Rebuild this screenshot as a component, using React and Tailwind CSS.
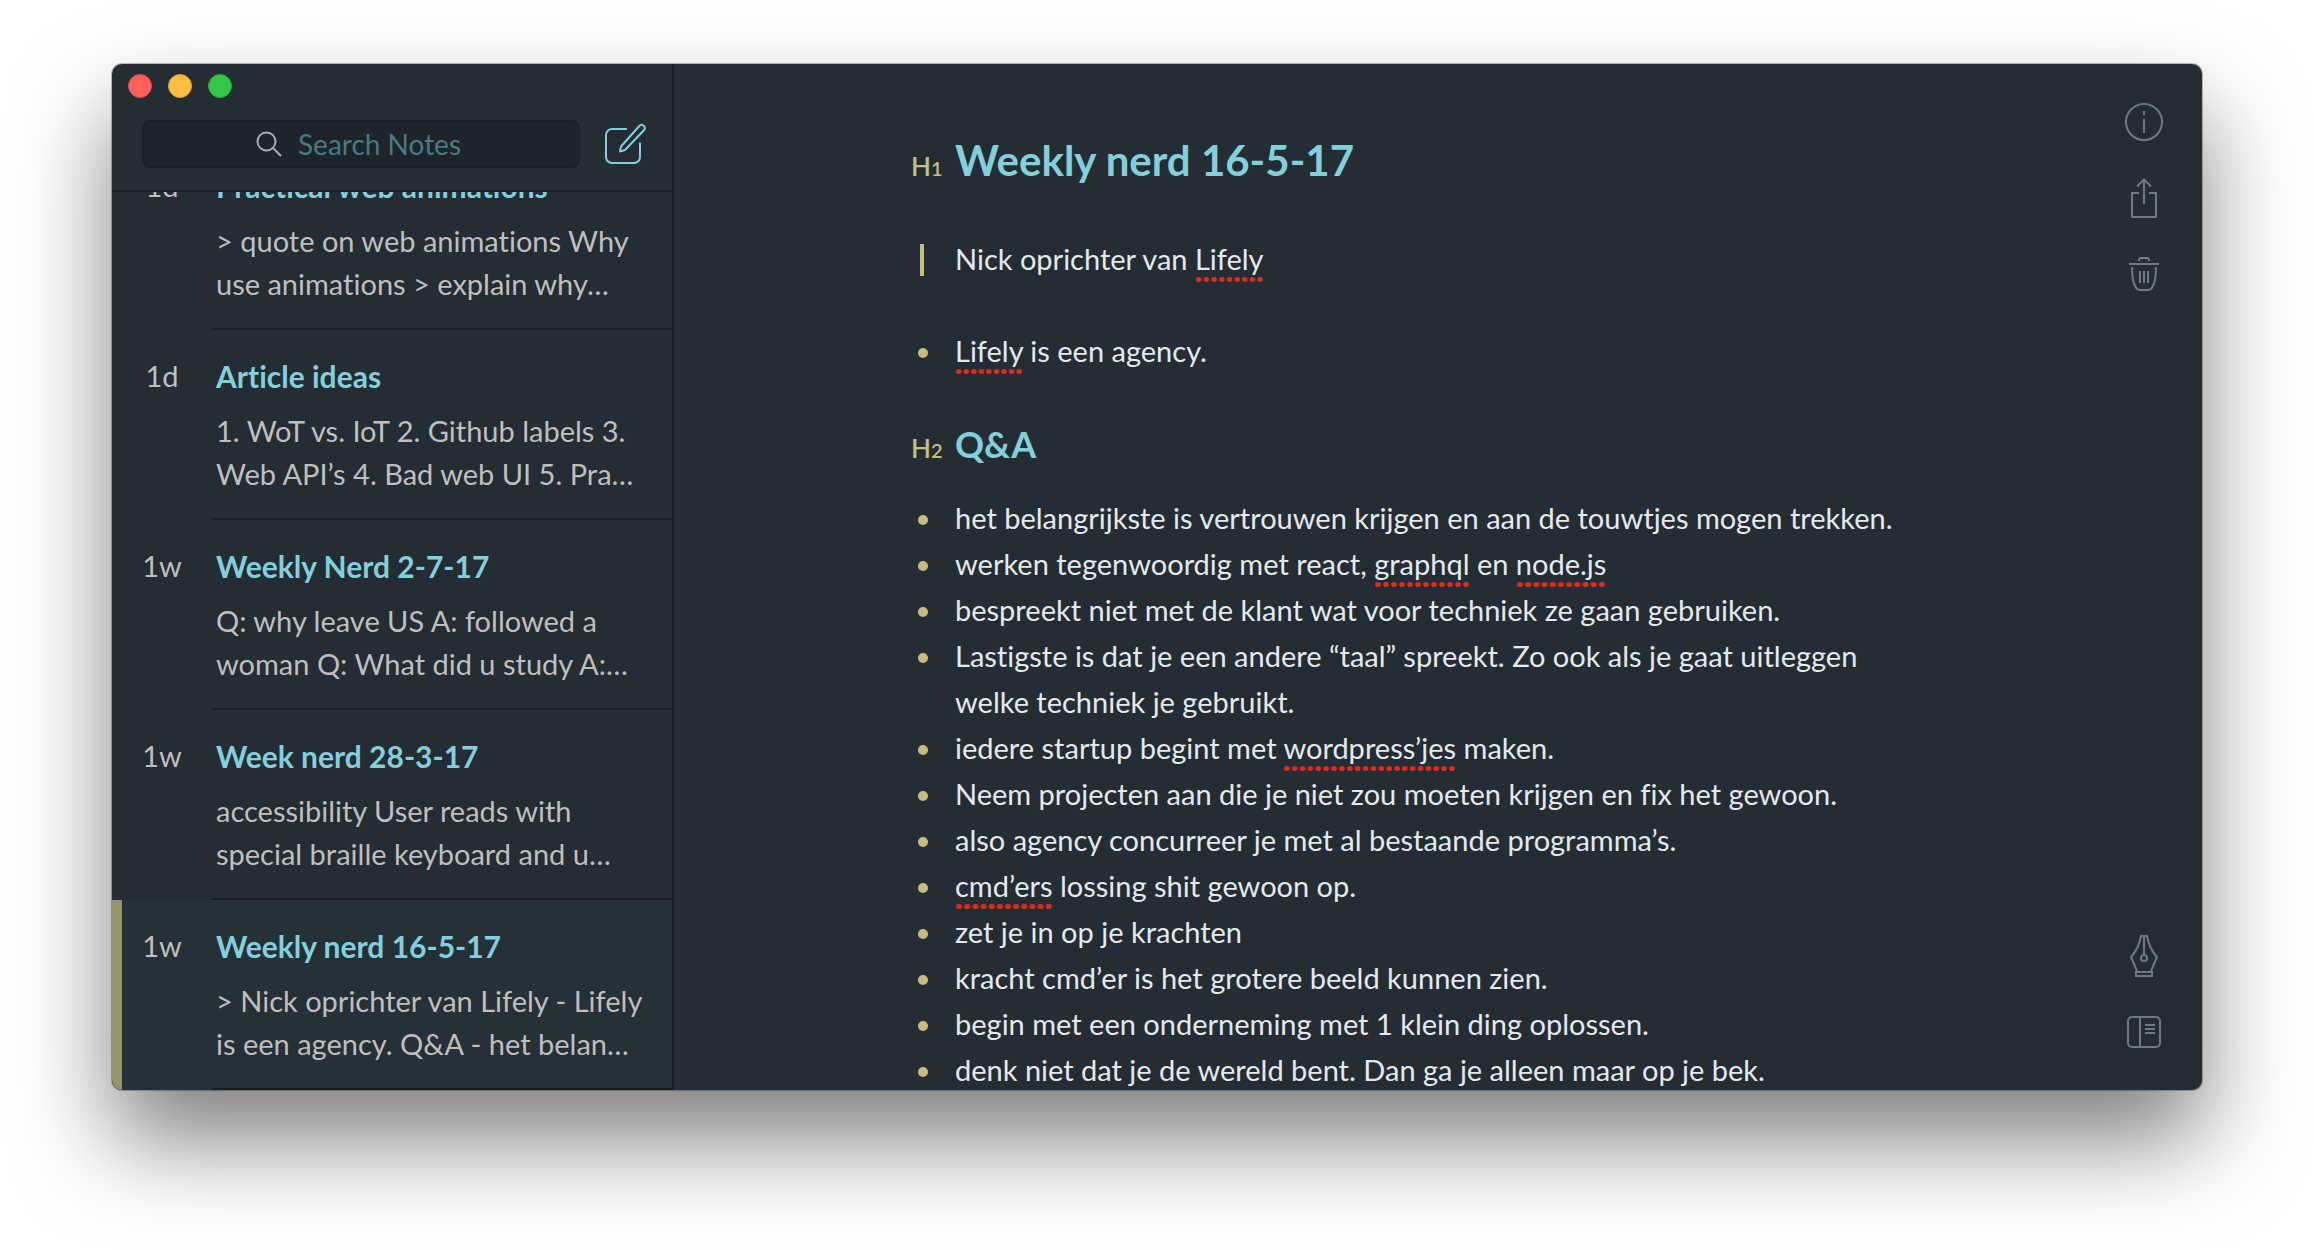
const notes = [
  {
    age: "1d",
    title: "Practical web animations",
    excerpt: "> quote on web animations Why\nuse animations > explain why…",
  },
  {
    age: "1d",
    title: "Article ideas",
    excerpt: "1. WoT vs. IoT 2. Github labels 3.\nWeb API’s 4. Bad web UI 5. Pra…",
  },
  {
    age: "1w",
    title: "Weekly Nerd 2-7-17",
    excerpt: "Q: why leave US A: followed a\nwoman Q: What did u study A:…",
  },
  {
    age: "1w",
    title: "Week nerd 28-3-17",
    excerpt: "accessibility User reads with\nspecial braille keyboard and u…",
  },
  {
    age: "1w",
    title: "Weekly nerd 16-5-17",
    excerpt: "> Nick oprichter van Lifely - Lifely\nis een agency. Q&A - het belan…",
    selected: true,
  },
];

function Misspelt({ children }) {
  return (
    <span className="bg-[radial-gradient(circle_at_50%_60%,#dc3024_1px,#b02a26_3px,transparent_3px)] bg-[length:8px_6px] bg-bottom-left pb-1.5 [background-repeat:round_no-repeat]">
      {children}
    </span>
  );
}

const answers = [
  "het belangrijkste is vertrouwen krijgen en aan de touwtjes mogen trekken.",
  <>
    werken tegenwoordig met react, <Misspelt>graphql</Misspelt> en <Misspelt>node.js</Misspelt>
  </>,
  "bespreekt niet met de klant wat voor techniek ze gaan gebruiken.",
  "Lastigste is dat je een andere “taal” spreekt. Zo ook als je gaat uitleggen welke techniek je gebruikt.",
  <>
    iedere startup begint met <Misspelt>wordpress’jes</Misspelt> maken.
  </>,
  "Neem projecten aan die je niet zou moeten krijgen en fix het gewoon.",
  "also agency concurreer je met al bestaande programma’s.",
  <>
    <Misspelt>cmd’ers</Misspelt> lossing shit gewoon op.
  </>,
  "zet je in op je krachten",
  "kracht cmd’er is het grotere beeld kunnen zien.",
  "begin met een onderneming met 1 klein ding oplossen.",
  "denk niet dat je de wereld bent. Dan ga je alleen maar op je bek.",
];

function Icon({ children }) {
  return (
    <svg viewBox="0 0 44 44" fill="none" stroke="currentColor" strokeWidth="2" className="size-11" aria-hidden="true">
      {children}
    </svg>
  );
}

function RailButton({ label, children }) {
  return (
    <button type="button" aria-label={label} className="size-11 text-[#6f7a80]">
      <Icon>{children}</Icon>
    </button>
  );
}

function NoteRow({ note }) {
  return (
    <li className="shrink-0">
      <button
        type="button"
        aria-current={note.selected ? "true" : undefined}
        className={
          note.selected
            ? "flex w-full bg-[#253137] text-left shadow-[inset_10px_0_#96936d]"
            : "flex w-full text-left"
        }
      >
        <span className="w-[100px] shrink-0 pt-6 text-center text-[29px] leading-[44px] text-[#bfbfbf]">
          {note.age}
        </span>
        <span className="flex-1 border-b-2 border-[#161e22] pt-6 pb-[23px] pl-1">
          <span className="block text-[30px] leading-[44px] font-bold text-[#83d0dc]">{note.title}</span>
          <span className="mt-[11px] block text-[29px] leading-[43px] whitespace-pre text-[#bfbfbf]">
            {note.excerpt}
          </span>
        </span>
      </button>
    </li>
  );
}

function Sidebar() {
  return (
    <aside className="flex w-[562px] shrink-0 flex-col border-r-2 border-[#161e22]">
      <header className="border-b-2 border-[#161e22] pt-2.5 pr-[25px] pb-[22px] pl-[30px]">
        <div className="-ml-3.5 flex gap-4">
          <button type="button" aria-label="Close" className="size-6 rounded-full border border-[#e2463f] bg-[#fe605b]" />
          <button type="button" aria-label="Minimize" className="size-6 rounded-full border border-[#e0a030] bg-[#febd40]" />
          <button type="button" aria-label="Zoom" className="size-6 rounded-full border border-[#1fae30] bg-[#34c84a]" />
        </div>
        <div className="mt-[22px] flex items-center gap-[23px]">
          <label className="flex h-12 flex-1 items-center justify-center gap-4 rounded-lg border-2 border-[#182026] bg-[#1d242a]">
            <svg viewBox="0 0 26 26" fill="none" stroke="#a9adb0" strokeWidth="2" className="size-[26px]" aria-hidden="true">
              <circle cx="10.5" cy="10.5" r="9" />
              <path d="M17 17l8 8" />
            </svg>
            <input
              type="text"
              aria-label="Search Notes"
              placeholder="Search Notes"
              className="w-[168px] bg-transparent text-[28px] leading-[44px] text-[#bfbfbf] outline-none placeholder:text-[#4b7a80]"
            />
          </label>
          <button type="button" aria-label="New note" className="size-11 text-[#83d0dc]">
            <Icon>
              <path d="M24 7H9a6 6 0 0 0-6 6v22a6 6 0 0 0 6 6h22a6 6 0 0 0 6-6V20.500" />
              <path d="M17 29.500l1-5L36.300 4a3 3 0 0 1 4.600 4.200L22 28z" strokeLinejoin="round" />
            </Icon>
          </button>
        </div>
      </header>
      <ul className="flex min-h-0 flex-1 flex-col justify-end overflow-hidden">
        {notes.map((note) => (
          <NoteRow key={note.title} note={note} />
        ))}
      </ul>
    </aside>
  );
}

function HeadingMark({ level }) {
  return (
    <span aria-hidden="true" className="text-[26px] leading-none font-semibold text-[#c7bd80]">
      H<span className="text-[20px]">{level}</span>
    </span>
  );
}

function Bullet({ children }) {
  return (
    <li className="grid grid-cols-[44px_1fr]">
      <span className="mt-5 ml-[7px] size-2.5 rounded-full bg-[#c7bd80]" />
      <span>{children}</span>
    </li>
  );
}

function Editor() {
  return (
    <main className="min-w-0 flex-1 overflow-hidden pl-[116px]">
      <article className="mx-auto max-w-[1054px] pt-[66px] pr-11 text-[29px] leading-[46px] text-[#e4e9ec]">
        <div className="grid grid-cols-[44px_1fr] items-baseline">
          <HeadingMark level={1} />
          <h1 className="text-[42px] leading-[60px] font-bold text-[#83d0dc]">Weekly nerd 16-5-17</h1>
        </div>
        <blockquote className="mt-[46px] grid grid-cols-[44px_1fr]">
          <span className="mt-2 ml-[9px] h-8 w-1 bg-[#c7bd80]" />
          <p>
            Nick oprichter van <Misspelt>Lifely</Misspelt>
          </p>
        </blockquote>
        <ul className="mt-[46px]">
          <Bullet>
            <Misspelt>Lifely</Misspelt> is een agency.
          </Bullet>
        </ul>
        <div className="mt-[46px] grid grid-cols-[44px_1fr] items-baseline">
          <HeadingMark level={2} />
          <h2 className="text-[36px] leading-[48px] font-bold text-[#83d0dc]">Q&amp;A</h2>
        </div>
        <ul className="mt-[27px]">
          {answers.map((answer, index) => (
            <Bullet key={index}>{answer}</Bullet>
          ))}
        </ul>
      </article>
    </main>
  );
}

function ToolRail() {
  return (
    <nav aria-label="Note tools" className="flex w-[116px] shrink-0 flex-col items-center justify-between py-9">
      <div className="flex flex-col gap-8">
        <RailButton label="Note info">
          <circle cx="22" cy="22" r="18" />
          <path d="M22 11v4M22 19v14" />
        </RailButton>
        <RailButton label="Share">
          <path d="M17 17h-7v24h24V17h-7M22 28V4M15 10.500l7-7 7 7" />
        </RailButton>
        <RailButton label="Delete note">
          <path d="M7 12h30M17 9V8q0-2 2-2h6q2 0 2 2v1" />
          <path d="M10 15c0 9 1 15 3 19q2 4 5 4h8q3 0 5-4c2-4 3-10 3-19" />
          <path d="M18 19v12M22 19v12M26 19v12" />
        </RailButton>
      </div>
      <div className="flex flex-col gap-8">
        <RailButton label="Markup bar">
          <path d="M15 37L9 23Q17 14 19 2h6q2 12 10 21l-6 14M14 38h16v4H14zM22 2v19" />
          <circle cx="22" cy="24" r="3" />
        </RailButton>
        <RailButton label="Change layout">
          <rect x="6" y="7" width="32" height="30" rx="4" />
          <path d="M18 7v30M23 15h10M23 19h10M23 23h10" />
        </RailButton>
      </div>
    </nav>
  );
}

export default function App() {
  return (
    <div className="h-screen overflow-hidden bg-white px-28 pt-16 pb-40 font-['Lato',sans-serif] [font-variant-ligatures:none]">
      <div className="flex h-full overflow-hidden rounded-[10px] bg-[#232d33] shadow-[0_0_0_1px_rgba(0,0,0,0.25),0_50px_95px_rgba(0,0,0,0.5)]">
        <Sidebar />
        <Editor />
        <ToolRail />
      </div>
    </div>
  );
}
